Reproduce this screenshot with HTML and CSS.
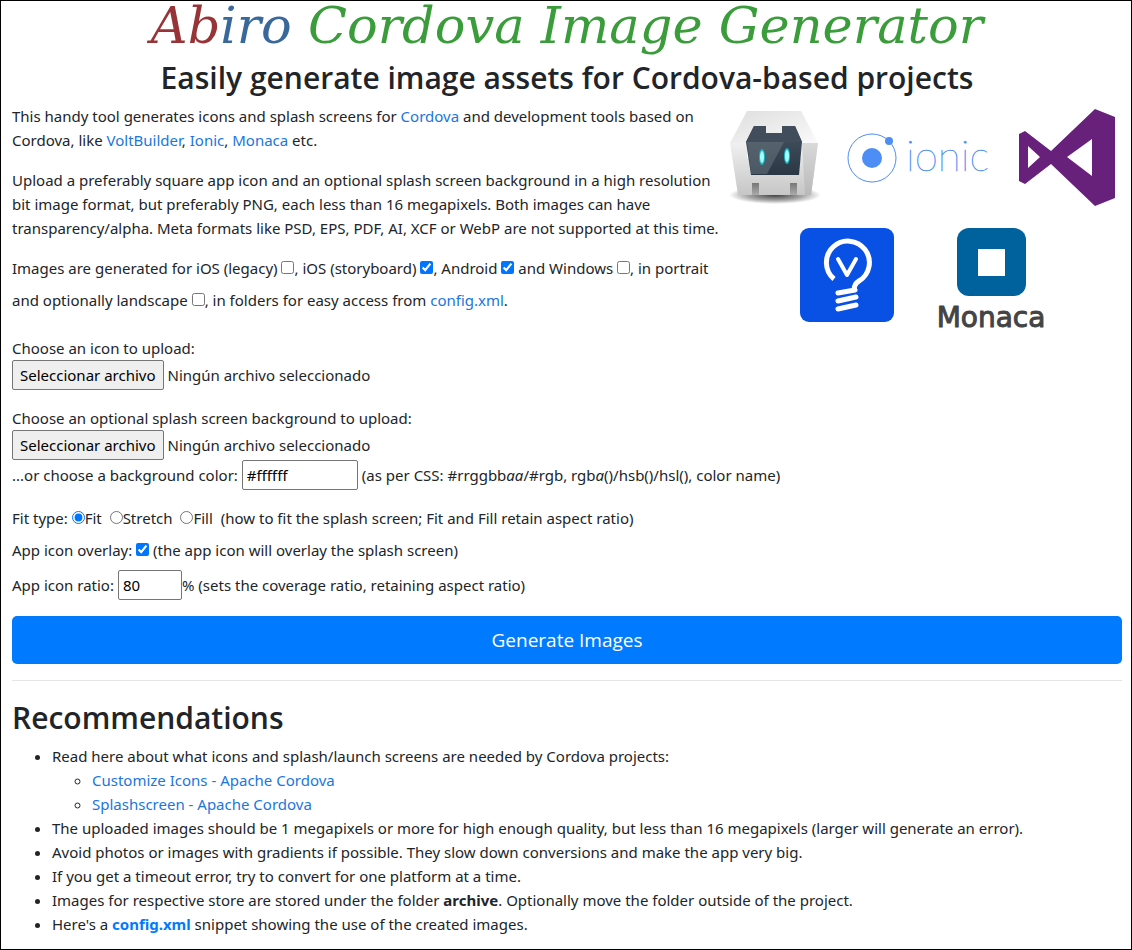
FILE: index.html
```html
<!DOCTYPE html>
<html lang="en">
<head>
<meta charset="utf-8">
<meta name="viewport" content="width=device-width, initial-scale=1">
<title>Abiro Cordova Image Generator</title>
<link rel="stylesheet" href="styles.css">
</head>
<body>
<main class="page">
  <header class="header">
    <h1 class="brand"><span class="brand-red">Ab</span><span class="brand-blue">iro</span> Cordova Image Generator</h1>
    <h2 class="heading">Easily generate image assets for Cordova-based projects</h2>
  </header>

  <form class="form">
    <div class="intro">
      <div class="intro-text">
        <p>This handy tool generates icons and splash screens for <a href="#">Cordova</a> and development tools based on Cordova, like <a href="#">VoltBuilder</a>, <a href="#">Ionic</a>, <a href="#">Monaca</a> etc.</p>
        <p>Upload a preferably square app icon and an optional splash screen background in a high resolution bit image format, but preferably PNG, each less than 16 megapixels. Both images can have transparency/alpha. Meta formats like PSD, EPS, PDF, AI, XCF or WebP are not supported at this time.</p>
        <p>Images are generated for <label class="option">iOS (legacy) <input type="checkbox"></label>, <label class="option">iOS (storyboard) <input type="checkbox" checked></label>, <label class="option">Android <input type="checkbox" checked></label> and <label class="option">Windows <input type="checkbox"></label>, in portrait and optionally <label class="option">landscape <input type="checkbox"></label>, in folders for easy access from <a href="#">config.xml</a>.</p>
      </div>
      <div class="logos">
        <div class="logo-row">
          <svg width="104" height="110" viewBox="722 104 104 110" role="img" aria-label="Cordova">
            <defs>
              <linearGradient id="body" x1="0" y1="0" x2="0" y2="1"><stop offset="0" stop-color="#f0f0f0"/><stop offset="1" stop-color="#c6c6c6"/></linearGradient>
              <linearGradient id="side" x1="0" y1="0" x2="0" y2="1"><stop offset="0" stop-color="#d9d9d9"/><stop offset="1" stop-color="#b9b9b9"/></linearGradient>
              <linearGradient id="top" x1="0" y1="0" x2="1" y2="1"><stop offset="0" stop-color="#dedede"/><stop offset="1" stop-color="#fafafa"/></linearGradient>
              <linearGradient id="face" x1="0" y1="0" x2="0" y2="1"><stop offset="0" stop-color="#46535f"/><stop offset="1" stop-color="#2a3846"/></linearGradient>
              <linearGradient id="leg" x1="0" y1="0" x2="0" y2="1"><stop offset="0" stop-color="#777"/><stop offset="1" stop-color="#aaa"/></linearGradient>
              <radialGradient id="shadow"><stop offset="0" stop-color="#000" stop-opacity=".75"/><stop offset=".6" stop-color="#000" stop-opacity=".35"/><stop offset="1" stop-color="#000" stop-opacity="0"/></radialGradient>
            </defs>
            <ellipse cx="775" cy="195" rx="46" ry="9" fill="url(#shadow)"/>
            <path d="M747 111h54l17 32H730z" fill="url(#top)"/>
            <path d="M730 143h17v15h54l1-15h16l-7 52h-73z" fill="url(#body)"/>
            <path d="M802 143h16l-7 52h-6z" fill="url(#side)"/>
            <path d="M754 126h12v7h16v-7h13l7 16-3 33h-48l-5-33z" fill="url(#face)"/>
            <path d="M754 126h12v7h16v-7h13l7 16h-56z" fill="#414d5a"/>
            <path d="M747 142h37l-17 32h-16z" fill="#74808a" opacity=".45"/>
            <ellipse cx="762" cy="157" rx="3" ry="8" fill="#1eb5c5"/><ellipse cx="762" cy="157" rx="2" ry="6" fill="#a4ffff"/>
            <ellipse cx="787" cy="156" rx="3" ry="8" fill="#1eb5c5"/><ellipse cx="787" cy="156" rx="2" ry="6" fill="#a4ffff"/>
            <path d="M752 183h7v12h-7zM790 183h7v12h-7z" fill="url(#leg)"/>
          </svg>
          <svg width="152" height="110" viewBox="846 104 152 110" role="img" aria-label="Ionic">
            <circle cx="872" cy="158" r="24" fill="none" stroke="#4d8df6"/>
            <circle cx="872" cy="158" r="10" fill="#4d8df6"/>
            <circle cx="889" cy="141" r="4" fill="#4d8df6"/>
            <text class="ionic-word" x="906" y="171">ionic</text>
          </svg>
          <svg width="98" height="110" viewBox="1018 104 98 110" role="img" aria-label="Visual Studio">
            <path fill="#68217a" fill-rule="evenodd" d="M1019 134l6-3 26 20 44-42 20 8v81l-20 8-44-42-26 20-6-3zM1028 146v22l12-11zM1067 157l25 19v-37z"/>
          </svg>
        </div>
        <div class="logo-row logo-row-center">
          <svg width="94" height="94" viewBox="0 0 94 94" role="img" aria-label="VoltBuilder">
            <rect width="94" height="94" rx="9" fill="#0950e5"/>
            <g fill="none" stroke="#fff" stroke-linecap="round" stroke-linejoin="round">
              <path stroke-width="5" stroke-linecap="butt" d="M34 51A21.500 21.500 0 1 1 59 53Q54 56 54 62"/>
              <path stroke-width="4" d="M38 31l9 16 9-16"/>
              <path stroke-width="5" d="M38 65l17-3M38 73l18-4M38 81l18-4"/>
            </g>
          </svg>
          <svg width="114" height="108" viewBox="0 0 114 108" role="img" aria-label="Monaca">
            <rect x="23" width="69" height="68" rx="12" fill="#00629d"/>
            <path d="M44 21h27v27H44z" fill="#fff"/>
            <text class="monaca-word" x="57" y="99">Monaca</text>
          </svg>
        </div>
      </div>
    </div>

    <div class="group">
      <label for="icon-file">Choose an icon to upload:</label>
      <div class="file-row">
        <button type="button" class="file-button" data-for="icon-file">Seleccionar archivo</button>
        <span>Ningún archivo seleccionado</span>
        <input type="file" id="icon-file" hidden>
      </div>
    </div>

    <div class="group">
      <label for="splash-file">Choose an optional splash screen background to upload:</label>
      <div class="file-row">
        <button type="button" class="file-button" data-for="splash-file">Seleccionar archivo</button>
        <span>Ningún archivo seleccionado</span>
        <input type="file" id="splash-file" hidden>
      </div>
      <div class="field-row">
        <label for="color">...or choose a background color:</label>
        <input class="text-input color-input" type="text" id="color" value="#ffffff">
        <span>(as per CSS: #rrggbb<i>aa</i>/#rgb, rgb<i>a</i>()/hsb()/hsl(), color name)</span>
      </div>
    </div>

    <div class="group">
      <div class="line">Fit type: <label class="choice"><input type="radio" name="fit" checked>Fit</label> <label class="choice"><input type="radio" name="fit">Stretch</label> <label class="choice"><input type="radio" name="fit">Fill</label> (how to fit the splash screen; Fit and Fill retain aspect ratio)</div>
      <div class="line"><label>App icon overlay: <input type="checkbox" checked></label> (the app icon will overlay the splash screen)</div>
      <div class="field-row">
        <label for="ratio">App icon ratio:</label>
        <span class="ratio"><input class="text-input ratio-input" type="text" id="ratio" value="80">% (sets the coverage ratio, retaining aspect ratio)</span>
      </div>
    </div>

    <button type="submit" class="submit">Generate Images</button>
  </form>

  <hr class="rule">

  <section>
    <h2 class="heading">Recommendations</h2>
    <ul class="list">
      <li>Read here about what icons and splash/launch screens are needed by Cordova projects:
        <ul class="list">
          <li><a href="#">Customize Icons - Apache Cordova</a></li>
          <li><a href="#">Splashscreen - Apache Cordova</a></li>
        </ul>
      </li>
      <li>The uploaded images should be 1 megapixels or more for high enough quality, but less than 16 megapixels (larger will generate an error).</li>
      <li>Avoid photos or images with gradients if possible. They slow down conversions and make the app very big.</li>
      <li>If you get a timeout error, try to convert for one platform at a time.</li>
      <li>Images for respective store are stored under the folder <b>archive</b>. Optionally move the folder outside of the project.</li>
      <li>Here's a <a href="#"><b>config.xml</b></a> snippet showing the use of the created images.</li>
    </ul>
  </section>
</main>
<script src="script.js"></script>
</body>
</html>
```
FILE: styles.css
```css
* { box-sizing: border-box; }

body {
  margin: 0;
  background: #fff;
  color: #212529;
  font: 15px/24px "Noto Sans", "Open Sans", sans-serif;
}

.page {
  min-height: 100vh;
  padding: 0 9px 0 11px;
  border: 1px solid #000;
}

a { color: #1a76e0; text-decoration: none; }
a:hover { text-decoration: underline; }
a b { color: #007bff; }
p { margin: 0 0 16px; }

.header { text-align: center; }

.brand {
  margin: 0 0 7px;
  color: #3a9c3a;
  font: italic 51px/49px "DejaVu Serif", serif;
}
.brand-red { color: #983438; }
.brand-blue { color: #39699b; }

.heading {
  margin: 0 0 5px;
  font: 600 30px/42px "Open Sans", "Noto Sans", sans-serif;
}

.intro { display: flex; }
.intro-text { flex: 1; }
.logos { flex: 0 0 400px; }
.logo-row { display: flex; gap: 20px; }
.logo-row-center { justify-content: center; gap: 40px; padding: 14px 0 0 4px; }
.ionic-word { fill: #4d8df6; stroke: #4d8df6; stroke-width: .4px; font: 100 42px Lato, sans-serif; }
.monaca-word { fill: #444; stroke: #444; stroke-width: 1px; stroke-linejoin: round; font: 28px "DejaVu Sans", sans-serif; text-anchor: middle; }

input { margin: 0; font-family: inherit; }
input[type="checkbox"], input[type="radio"] { width: 13px; height: 13px; }

.option { display: inline-block; margin-bottom: 8px; }
.group { margin-bottom: 16px; }
.line { margin-bottom: 8px; }
.choice { margin-right: 4px; }

.file-row, .field-row {
  display: flex;
  align-items: center;
  gap: 4px;
  min-height: 30px;
}

.file-button {
  height: 30px;
  padding: 0 7px;
  border: 1px solid #767676;
  border-radius: 2px;
  background: #efefef;
  color: #000;
  font: inherit;
}

.text-input {
  height: 30px;
  padding: 1px 4px;
  border: 1px solid #767676;
  border-radius: 2px;
  color: #000;
  font-size: 15px;
}
.color-input { width: 116px; }
.ratio-input { width: 64px; }

.submit {
  display: block;
  width: 100%;
  height: 48px;
  border: 0;
  border-radius: 5px;
  background: #007bff;
  color: #fff;
  font: 19px/30px "Open Sans", "Noto Sans", sans-serif;
}

.rule { margin: 16px 0; border: 0; border-top: 1px solid #e5e5e5; }

.list { margin: 0; padding-left: 40px; }
```
FILE: script.js
```js
document.querySelectorAll('.file-button').forEach(function (button) {
  var input = document.getElementById(button.dataset.for);
  button.addEventListener('click', function () { input.click(); });
  input.addEventListener('change', function () {
    if (input.files.length) input.previousElementSibling.textContent = input.files[0].name;
  });
});
```
